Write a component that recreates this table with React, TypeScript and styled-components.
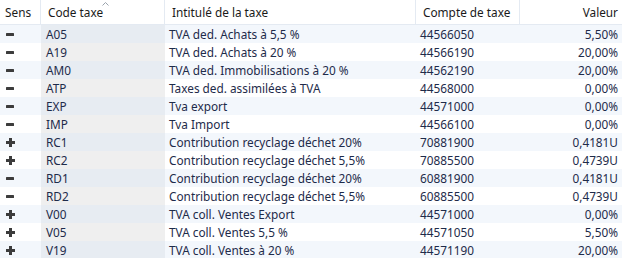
import { FC } from "react";
import styled, { createGlobalStyle } from "styled-components";

type Sens = "+" | "-";

interface Taxe {
  sens: Sens;
  code: string;
  intitule: string;
  compte: string;
  valeur: string;
}

const taxes: Taxe[] = [
  { sens: "-", code: "A05", intitule: "TVA ded. Achats à 5,5 %", compte: "44566050", valeur: "5,50%" },
  { sens: "-", code: "A19", intitule: "TVA ded. Achats à 20 %", compte: "44566190", valeur: "20,00%" },
  { sens: "-", code: "AM0", intitule: "TVA ded. Immobilisations à 20 %", compte: "44562190", valeur: "20,00%" },
  { sens: "-", code: "ATP", intitule: "Taxes ded. assimilées à TVA", compte: "44568000", valeur: "0,00%" },
  { sens: "-", code: "EXP", intitule: "Tva export", compte: "44571000", valeur: "0,00%" },
  { sens: "-", code: "IMP", intitule: "Tva Import", compte: "44566100", valeur: "0,00%" },
  { sens: "+", code: "RC1", intitule: "Contribution recyclage déchet 20%", compte: "70881900", valeur: "0,4181U" },
  { sens: "+", code: "RC2", intitule: "Contribution recyclage déchet 5,5%", compte: "70885500", valeur: "0,4739U" },
  { sens: "-", code: "RD1", intitule: "Contribution recyclage déchet 20%", compte: "60881900", valeur: "0,4181U" },
  { sens: "-", code: "RD2", intitule: "Contribution recyclage déchet 5,5%", compte: "60885500", valeur: "0,4739U" },
  { sens: "+", code: "V00", intitule: "TVA coll. Ventes Export", compte: "44571000", valeur: "0,00%" },
  { sens: "+", code: "V05", intitule: "TVA coll. Ventes 5,5 %", compte: "44571050", valeur: "5,50%" },
  { sens: "+", code: "V19", intitule: "TVA coll. Ventes à 20 %", compte: "44571190", valeur: "20,00%" },
];

const SensIcon: FC<{ sens: Sens }> = ({ sens }) => (
  <svg width="9" height="9" viewBox="0 0 9 9">
    {sens === "+" ? (
      <path d="M3 0h3v3h3v3H6v3H3V6H0V3h3z" fill="#3c3c3c" />
    ) : (
      <rect x="0" y="3" width="8" height="3" rx="0.5" fill="#3c3c3c" />
    )}
  </svg>
);

const SortCaret: FC = () => (
  <Caret width="7" height="4" viewBox="0 0 7 4">
    <path d="M0.5 3.5L3.5 0.5L6.5 3.5" fill="none" stroke="#9aa3ad" strokeWidth="1" />
  </Caret>
);

const App: FC = () => {
  return (
    <>
      <GlobalStyle />
      <Grid>
        <HeaderRow>
          <HeadCell>Sens</HeadCell>
          <HeadCell>
            Code taxe
            <SortCaret />
          </HeadCell>
          <HeadCell>Intitulé de la taxe</HeadCell>
          <HeadCell>Compte de taxe</HeadCell>
          <HeadCell $right>Valeur</HeadCell>
        </HeaderRow>
        {taxes.map((t, i) => (
          <Row key={t.code} $odd={i % 2 === 0}>
            <SensCell>
              <SensIcon sens={t.sens} />
            </SensCell>
            <CodeCell $odd={i % 2 === 0}>{t.code}</CodeCell>
            <Cell>{t.intitule}</Cell>
            <Cell>{t.compte}</Cell>
            <Cell $right>{t.valeur}</Cell>
          </Row>
        ))}
      </Grid>
    </>
  );
};

export default App;

const GlobalStyle = createGlobalStyle`
  html, body {
    margin: 0;
    padding: 0;
    background: #fff;
  }
  body {
    font-family: "Noto Sans", "Open Sans", sans-serif;
    font-size: 11.8px;
  }
`;

const columns = "41px 124px 251px 104px 102px";

const Grid = styled.div`
  width: 622px;
  height: 258px;
  overflow: hidden;
  background: #fff;
`;

const HeaderRow = styled.div`
  display: grid;
  grid-template-columns: ${columns};
  height: 24px;
  border-bottom: 1px solid #e4eaf2;
`;

const HeadCell = styled.div<{ $right?: boolean }>`
  position: relative;
  display: flex;
  align-items: center;
  justify-content: ${(p) => (p.$right ? "flex-end" : "flex-start")};
  padding: 0 ${(p) => (p.$right ? "4px" : "0")} 0 ${(p) => (p.$right ? "0" : "7px")};
  color: #1a1a1a;
  border-right: 1px solid #e4eaf2;
  white-space: nowrap;

  &:first-child {
    padding-left: 5px;
  }
  &:last-child {
    border-right: none;
  }
`;

const Caret = styled.svg`
  position: absolute;
  left: 61px;
  top: 2px;
`;

const Row = styled.div<{ $odd: boolean }>`
  display: grid;
  grid-template-columns: ${columns};
  height: 18px;
  background: ${(p) => (p.$odd ? "#f3f7fc" : "#fff")};
`;

const Cell = styled.div<{ $right?: boolean }>`
  display: flex;
  align-items: center;
  justify-content: ${(p) => (p.$right ? "flex-end" : "flex-start")};
  padding: ${(p) => (p.$right ? "0 4px 0 0" : "0 0 0 4px")};
  color: #1e2b4a;
  white-space: nowrap;
  overflow: hidden;
`;

const SensCell = styled(Cell)`
  padding-left: 6px;
`;

const CodeCell = styled(Cell)<{ $odd: boolean }>`
  padding-left: 5px;
  background: ${(p) => (p.$odd ? "#e7ecf2" : "#efefef")};
`;
